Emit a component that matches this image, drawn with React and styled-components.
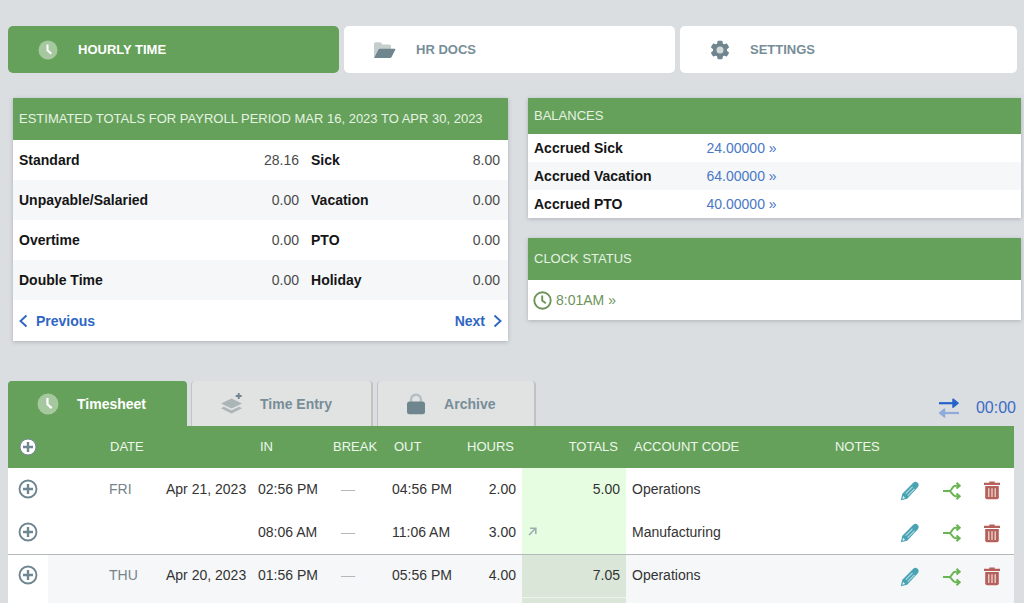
import React from "react";
import styled, { createGlobalStyle, css } from "styled-components";

/**
 * Defines the colors
 */
const colors = {
  green: "#65a15a",
  page: "#dadee1",
  slate: "#70868f",
  slateText: "#778d98",
  blue: "#2f66c4",
  stripe: "#f6f7f9",
  mint: "#e7fde2",
  sage: "#d9e6d8"
};

const GlobalStyle = createGlobalStyle`
  *, *::before, *::after {
    box-sizing: border-box;
  }

  body {
    margin: 0;
    background: ${colors.page};
    color: #333;
    font: 14px/20px "Liberation Sans", Arial, sans-serif;
  }

  button {
    border: 0;
    padding: 0;
    background: none;
    color: inherit;
    font: inherit;
    cursor: pointer;
  }

  table {
    width: 100%;
    border-collapse: collapse;
    table-layout: fixed;
  }

  td, th {
    padding: 0;
    text-align: left;
    font-weight: normal;
  }

  svg {
    display: block;
    flex: none;
  }
`;

/**
 * Styles the page
 */
const Page = styled.div`
  padding-top: 26px;
`;

const Nav = styled.nav`
  display: grid;
  grid-template-columns: 331fr 331fr 337fr;
  gap: 5px;
  padding: 0 7px 0 8px;
`;

const NavButton = styled.button`
  display: flex;
  align-items: center;
  gap: 20px;
  height: 47px;
  padding: 0 30px;
  border-radius: 5px;
  background: ${props => (props.$active ? colors.green : "#fff")};
  color: ${props => (props.$active ? "#fff" : colors.slateText)};
  font-size: 13px;
  font-weight: bold;
`;

/**
 * Styles the panels
 */
const Panels = styled.div`
  display: grid;
  grid-template-columns: 495fr 493fr;
  align-items: start;
  gap: 20px;
  padding: 25px 3px 40px 13px;
`;

const Stack = styled.div`
  display: grid;
  gap: 20px;
`;

const Panel = styled.section`
  background: #fff;
  box-shadow: 0 1px 4px rgba(60, 70, 80, 0.28);
`;

const PanelTitle = styled.h2`
  display: flex;
  align-items: center;
  height: ${props => (props.$compact ? 36 : 42)}px;
  margin: 0;
  padding: 0 6px;
  background: ${colors.green};
  color: #e6f3e3;
  font-size: 13px;
  font-weight: normal;
  white-space: nowrap;
`;

const PanelTable = styled.table`
  tr {
    height: ${props => props.$rowHeight}px;
  }

  tr:nth-child(even) {
    background: ${colors.stripe};
  }
`;

const Label = styled.th`
  width: ${props => props.$width};
  padding: 0 6px;
  color: #151515;
  font-weight: bold;
`;

const Value = styled.td`
  width: ${props => props.$width};
  padding: 0 6px;
  color: #4a4a4a;
  text-align: right;

  &:last-child {
    padding-right: 8px;
  }
`;

const BalanceValue = styled.td`
  padding: 0 6px;
`;

const Link = styled.a`
  color: #4a78c6;
  text-decoration: none;
`;

const Pager = styled.div`
  display: flex;
  align-items: center;
  justify-content: space-between;
  height: 41px;
  padding: 0 6px;
`;

const PagerButton = styled.button`
  display: flex;
  align-items: center;
  gap: 8px;
  color: ${colors.blue};
  font-weight: bold;
`;

const ClockLink = styled.a`
  display: flex;
  align-items: center;
  gap: 4px;
  height: 40px;
  padding: 0 5px;
  color: #6c9458;
  text-decoration: none;
`;

/**
 * Styles the timesheet
 */
const Sheet = styled.section`
  padding: 0 8px;
`;

const TabBar = styled.div`
  display: flex;
  align-items: flex-end;
`;

const Tab = styled.button`
  display: flex;
  align-items: center;
  gap: ${props => props.$gap}px;
  height: 45px;
  margin-right: 4px;
  padding: 0 39px 0 28px;
  border: solid #bfc3c5;
  border-width: 0 2px 0 1px;
  border-radius: 4px 4px 0 0;
  background: #e1e2e2;
  color: ${colors.slateText};
  font-weight: bold;
  ${props =>
    props.$active &&
    css`
      border-color: ${colors.green};
      background: ${colors.green};
      color: #fff;
    `}
`;

const Timer = styled.button`
  display: flex;
  align-items: center;
  gap: 16px;
  height: 36px;
  margin-left: auto;
  color: #3c6cc6;
  font-size: 16px;
`;

const SheetBody = styled.div`
  margin-right: 2px;
  background: #fff;
`;

const Col = styled.col`
  width: ${props => props.$width}px;
`;

const HeadCell = styled.th`
  height: 42px;
  padding: 0 8px 1px ${props => props.$left || 8}px;
  background: ${colors.green};
  color: #eef7ec;
  font-size: 13px;
  text-align: ${props => props.$align || "left"};
  white-space: nowrap;
`;

const Row = styled.tr`
  height: 43px;
  background: ${props => (props.$shaded ? colors.stripe : "#fff")};
  border-top: ${props => (props.$ruled ? "1px solid #b3b8b8" : "0")};
`;

const Cell = styled.td`
  padding: ${props => (props.$icon ? "2px 6px 0" : "0 6px 1px")};
  padding-left: ${props => props.$left || 6}px;
  color: ${props => props.$color || "#333"};
  text-align: ${props => props.$align || "left"};
  white-space: nowrap;
`;

const AddCell = styled.td`
  padding: 0 0 1px 10px;
  background: #fff;
`;

const TotalCell = styled(Cell)`
  background: ${props => (props.$shaded ? colors.sage : colors.mint)};
`;

/**
 * Shows the start of the next entry below the last full row
 */
const NextRow = styled.tr`
  height: 6px;
  background: ${colors.stripe};

  td:first-child {
    background: #fff;
  }

  td:nth-child(8) {
    border-top: 1px solid #edf4eb;
    background: ${colors.sage};
  }
`;

const IconButton = styled.button`
  display: block;
`;

/**
 * Icons
 */
const ClockIcon = ({ size = 20 }) => (
  <svg width={size} height={size} viewBox="0 0 20 20">
    <circle cx="10" cy="10" r="9.5" fill="#fff" opacity=".42" />
    <path d="M9.5 4.5v5.8l3.8 3.4" fill="none" stroke="#fff" strokeWidth="2" />
  </svg>
);

const ClockOutlineIcon = () => (
  <svg width="19" height="19" viewBox="0 0 19 19" fill="none" stroke="#6c9458">
    <circle cx="9.5" cy="9.5" r="8.2" strokeWidth="1.9" />
    <path d="M9.2 4.6v5l3.6 2.6" strokeWidth="1.9" />
  </svg>
);

const FolderIcon = () => (
  <svg width="22" height="18" viewBox="0 0 22 18">
    <path d="M0 15.500V2.800Q0 1.300 1.500 1.300h5l2 2.200h7q1.500 0 1.500 1.500v4H4.500z" fill="#c5cdcd" />
    <path d="M6 7.700h14.800q1 0 .5 1l-3.700 7.300q-.5 1-1.600 1H.8q-1 0-.5-1L4.500 8.500q.5-.8 1.500-.8z" fill={colors.slate} />
  </svg>
);

const GearIcon = () => (
  <svg width="20" height="20" viewBox="0 0 20 20" fill={colors.slate}>
    <circle cx="10" cy="10" r="7" />
    {[0, 60, 120, 180, 240, 300].map(angle => (
      <path key={angle} d="M7 4.500 7.500 1.400q.1-.7.800-.7h3.400q.7 0 .8.700l.5 3.100z" transform={`rotate(${angle} 10 10)`} />
    ))}
    <circle cx="10" cy="10" r="3.500" fill="#d3dada" />
  </svg>
);

const LayersIcon = () => (
  <svg width="24" height="22" viewBox="0 0 24 22">
    <path d="M11.500 5.500 22 10.400l-10.500 5L1 10.400z" fill="#abb5b8" />
    <path d="m1 15.200 2.900-1.400 7.600 3.600 7.600-3.600 2.900 1.400-10.500 5.300z" fill="#abb5b8" />
    <path d="M18.700 0v6M15.700 3h6" stroke={colors.slate} strokeWidth="1.900" />
  </svg>
);

const LockIcon = () => (
  <svg width="20" height="22" viewBox="0 0 20 22">
    <path d="M5 9.500V6.700a5 5 0 0 1 10 0v2.800" fill="none" stroke="#b3bfc1" strokeWidth="2.400" />
    <rect x="1" y="8.500" width="18" height="12.800" rx="2.500" fill={colors.slate} />
  </svg>
);

const SwapIcon = () => (
  <svg width="22" height="20" viewBox="0 0 22 20">
    <path d="M1 5.200h14" stroke="#2463c9" strokeWidth="2.200" />
    <path d="M15 1.200 20 5.200 15 9.200z" fill="#2463c9" stroke="#2463c9" strokeWidth="1.500" strokeLinejoin="round" />
    <path d="M7 15h14" stroke="#8eabdc" strokeWidth="2.200" />
    <path d="M6.500 11 1.500 15 6.500 19z" fill="#8eabdc" stroke="#8eabdc" strokeWidth="1.500" strokeLinejoin="round" />
  </svg>
);

const ChevronIcon = ({ right }) => (
  <svg width="9" height="14" viewBox="0 0 9 14" fill="none" stroke={colors.blue} strokeWidth="1.900">
    <path d={right ? "m1.500 1.500 6 5.500-6 5.500" : "m7.500 1.500-6 5.500 6 5.500"} />
  </svg>
);

const PlusIcon = ({ filled }) => (
  <svg width="20" height="20" viewBox="0 0 20 20" stroke="#6f8791">
    <circle cx="10" cy="10" r={filled ? 8 : 8.5} strokeWidth={filled ? 1 : 1.9} fill={filled ? "#fff" : "none"} />
    <path d="M10 5v10M5 10h10" strokeWidth="2.400" />
  </svg>
);

const PencilIcon = () => (
  <svg width="20" height="20" viewBox="0 0 20 20">
    <path d="M.800 19.200 2.300 12.800 13 2.100q2-2 4-.9 2.200 1.200 1.600 3.500-.2.900-1 1.700L7.200 17.700z" fill="#4aa3b3" />
    <path d="m5.700 12.700 6.800-6.800M7.700 14.700l6.800-6.800" stroke="#b4dbe2" strokeWidth="1.100" />
    <path d="m2.300 17.700.8-2.800 2 2z" fill="#eef8fa" />
  </svg>
);

const SplitIcon = () => (
  <svg width="20" height="18" viewBox="0 0 20 18" fill="none" stroke="#68b553" strokeWidth="2">
    <path d="M1 9h6.200C9.800 9 10 3.700 13.500 3.700H17M7.200 9c2.600 0 2.800 5.300 6.300 5.300H17" />
    <path d="m14.500.8 3.200 2.900-3.200 2.900M14.500 11.400l3.200 2.900-3.200 2.900" />
  </svg>
);

const TrashIcon = () => (
  <svg width="16" height="19" viewBox="0 0 16 19">
    <path d="M5.300 1.800V.6h5.400v1.200H16v2.300H0V1.800z" fill="#b5605a" />
    <path d="M1.200 5h13.600v11.300q0 2-2 2H3.200q-2 0-2-2z" fill="#b5605a" />
    <path d="M4.800 7.200v8.700M8 7.200v8.700M11.200 7.200v8.700" stroke="#f0d8d5" strokeWidth="1.300" />
  </svg>
);

const LinkedIcon = () => (
  <svg width="9" height="9" viewBox="0 0 9 9" fill="none" stroke="#9caeb2" strokeWidth="1.600">
    <path d="M1 8 7.500 1.500M2 1.200h5.800V7" />
  </svg>
);

const totals = [
  ["Standard", "28.16", "Sick", "8.00"],
  ["Unpayable/Salaried", "0.00", "Vacation", "0.00"],
  ["Overtime", "0.00", "PTO", "0.00"],
  ["Double Time", "0.00", "Holiday", "0.00"]
];

const balances = [
  ["Accrued Sick", "24.00000"],
  ["Accrued Vacation", "64.00000"],
  ["Accrued PTO", "40.00000"]
];

const entries = [
  { day: "FRI", date: "Apr 21, 2023", in: "02:56 PM", out: "04:56 PM", hours: "2.00", total: "5.00", account: "Operations" },
  { in: "08:06 AM", out: "11:06 AM", hours: "3.00", linked: true, account: "Manufacturing" },
  { day: "THU", date: "Apr 20, 2023", in: "01:56 PM", out: "05:56 PM", hours: "4.00", total: "7.05", account: "Operations", shaded: true }
];

/**
 * Column widths; the account code takes what is left
 */
const columns = [40, 112, 92, 78, 56, 73, 63, 104, null, 62, 42, 42, 36];

/**
 * Displays the estimated totals
 */
const EstimatedTotals = () => (
  <Panel>
    <PanelTitle>ESTIMATED TOTALS FOR PAYROLL PERIOD MAR 16, 2023 TO APR 30, 2023</PanelTitle>
    <PanelTable $rowHeight={40}>
      <tbody>
        {totals.map(([name, value, otherName, otherValue]) => (
          <tr key={name}>
            <Label scope="row" $width="32%">{name}</Label>
            <Value $width="27%">{value}</Value>
            <Label scope="row" $width="18%">{otherName}</Label>
            <Value $width="23%">{otherValue}</Value>
          </tr>
        ))}
      </tbody>
    </PanelTable>
    <Pager>
      <PagerButton><ChevronIcon />Previous</PagerButton>
      <PagerButton>Next<ChevronIcon right /></PagerButton>
    </Pager>
  </Panel>
);

/**
 * Displays one time entry
 */
const Entry = ({ entry, ruled }) => (
  <Row $shaded={entry.shaded} $ruled={ruled}>
    <AddCell>
      <IconButton aria-label="Add"><PlusIcon /></IconButton>
    </AddCell>
    <Cell $left={61} $color="#75838a">{entry.day}</Cell>
    <Cell>{entry.date}</Cell>
    <Cell>{entry.in}</Cell>
    <Cell $left={11} $color="#b4b8ba">—</Cell>
    <Cell>{entry.out}</Cell>
    <Cell $align="right">{entry.hours}</Cell>
    <TotalCell $shaded={entry.shaded} $align="right">
      {entry.linked ? <LinkedIcon /> : entry.total}
    </TotalCell>
    <Cell>{entry.account}</Cell>
    <Cell />
    <Cell $icon>
      <IconButton aria-label="Edit"><PencilIcon /></IconButton>
    </Cell>
    <Cell $icon>
      <IconButton aria-label="Split"><SplitIcon /></IconButton>
    </Cell>
    <Cell $icon>
      <IconButton aria-label="Delete"><TrashIcon /></IconButton>
    </Cell>
  </Row>
);

/**
 * Displays the timesheet
 */
const Timesheet = () => (
  <Sheet>
    <TabBar>
      <Tab $active $gap={18}><ClockIcon size={22} />Timesheet</Tab>
      <Tab $gap={16}><LayersIcon />Time Entry</Tab>
      <Tab $gap={18}><LockIcon />Archive</Tab>
      <Timer><SwapIcon />00:00</Timer>
    </TabBar>
    <SheetBody>
      <table>
        <colgroup>
          {columns.map((width, index) => (
            width ? <Col key={index} $width={width} /> : <col key={index} />
          ))}
        </colgroup>
        <thead>
          <tr>
            <HeadCell $left={10}>
              <IconButton aria-label="Add"><PlusIcon filled /></IconButton>
            </HeadCell>
            <HeadCell colSpan={2} $left={62}>DATE</HeadCell>
            <HeadCell>IN</HeadCell>
            <HeadCell $left={3}>BREAK</HeadCell>
            <HeadCell>OUT</HeadCell>
            <HeadCell $align="right">HOURS</HeadCell>
            <HeadCell $align="right">TOTALS</HeadCell>
            <HeadCell>ACCOUNT CODE</HeadCell>
            <HeadCell colSpan={4} $left={3}>NOTES</HeadCell>
          </tr>
        </thead>
        <tbody>
          {entries.map((entry, index) => (
            <Entry key={index} entry={entry} ruled={index > 0 && Boolean(entry.day)} />
          ))}
          <NextRow>
            {columns.map((width, index) => <td key={index} />)}
          </NextRow>
        </tbody>
      </table>
    </SheetBody>
  </Sheet>
);

const App = () => (
  <>
    <GlobalStyle />
    <Page>
      <Nav>
        <NavButton $active><ClockIcon />HOURLY TIME</NavButton>
        <NavButton><FolderIcon />HR DOCS</NavButton>
        <NavButton><GearIcon />SETTINGS</NavButton>
      </Nav>
      <Panels>
        <EstimatedTotals />
        <Stack>
          <Panel>
            <PanelTitle $compact>BALANCES</PanelTitle>
            <PanelTable $rowHeight={28}>
              <tbody>
                {balances.map(([name, value]) => (
                  <tr key={name}>
                    <Label scope="row" $width="35%">{name}</Label>
                    <BalanceValue><Link href="#">{value} »</Link></BalanceValue>
                  </tr>
                ))}
              </tbody>
            </PanelTable>
          </Panel>
          <Panel>
            <PanelTitle>CLOCK STATUS</PanelTitle>
            <ClockLink href="#"><ClockOutlineIcon />8:01AM »</ClockLink>
          </Panel>
        </Stack>
      </Panels>
      <Timesheet />
    </Page>
  </>
);

export default App;
